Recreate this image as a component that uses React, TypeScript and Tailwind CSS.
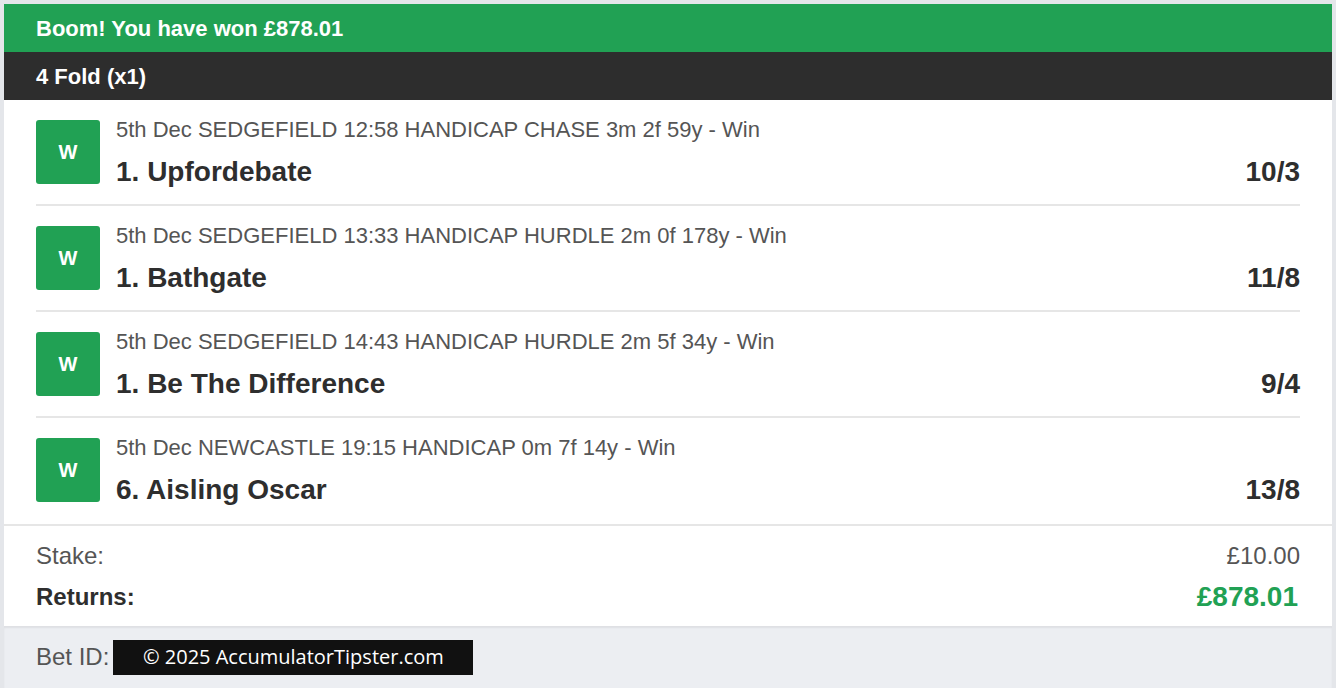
const legs = [
  {
    info: "5th Dec SEDGEFIELD 12:58 HANDICAP CHASE 3m 2f 59y - Win",
    runner: "1. Upfordebate",
    odds: "10/3",
  },
  {
    info: "5th Dec SEDGEFIELD 13:33 HANDICAP HURDLE 2m 0f 178y - Win",
    runner: "1. Bathgate",
    odds: "11/8",
  },
  {
    info: "5th Dec SEDGEFIELD 14:43 HANDICAP HURDLE 2m 5f 34y - Win",
    runner: "1. Be The Difference",
    odds: "9/4",
  },
  {
    info: "5th Dec NEWCASTLE 19:15 HANDICAP 0m 7f 14y - Win",
    runner: "6. Aisling Oscar",
    odds: "13/8",
  },
];

const App = () => {
  return (
    <div
      className="min-h-[688px] bg-[#e4e6ea] px-[4px] pt-[4px]"
      style={{ fontFamily: '"Liberation Sans", Arial, sans-serif' }}
    >
      <div className="bg-white">
        {/* Cabecera */}
        <div className="flex h-[48px] items-center bg-[#21a154] px-8 text-[22px] font-bold text-white">
          Boom! You have won £878.01
        </div>
        <div className="flex h-[48px] items-center bg-[#2d2d2d] px-8 text-[22px] font-bold text-white">
          4 Fold (x1)
        </div>

        {/* Selecciones */}
        <div className="px-8">
          {legs.map((leg, i) => (
            <div
              key={leg.runner}
              className={`flex h-[106px] items-start gap-4 pt-[20px] ${
                i < legs.length - 1 ? "border-b-2 border-[#e6e6e6]" : ""
              }`}
            >
              <div className="flex h-[64px] w-[64px] shrink-0 items-center justify-center rounded-[3px] bg-[#21a154] text-[20px] font-bold text-white">
                W
              </div>
              <div className="flex-1">
                <p className="text-[22px] leading-[20px] text-[#555555]">{leg.info}</p>
                <div className="mt-[15px] flex items-center justify-between text-[28px] font-bold leading-[34px] text-[#2e2e2e]">
                  <span>{leg.runner}</span>
                  <span>{leg.odds}</span>
                </div>
              </div>
            </div>
          ))}
        </div>

        {/* Stake / Returns */}
        <div className="border-t-2 border-[#e6e6e6] px-8 pb-[10px] pt-3 text-[24px]">
          <div className="flex h-[36px] items-center justify-between text-[#555555]">
            <span>Stake:</span>
            <span>£10.00</span>
          </div>
          <div className="mt-[4px] flex h-[38px] items-center justify-between">
            <span className="font-bold text-[#2e2e2e]">Returns:</span>
            <span className="pr-[2px] text-[28px] font-bold text-[#21a154]">£878.01</span>
          </div>
        </div>
      </div>

      {/* Bet ID */}
      <div className="flex h-[62px] items-center bg-[#eceef2] px-8 shadow-[inset_0_2px_2px_rgba(0,0,0,0.06)]">
        <span className="text-[24px] text-[#555555]">Bet ID:</span>
        <span
          className="ml-[4px] flex h-[35px] w-[360px] items-center justify-center bg-[#111111] text-[20px] text-white"
          style={{ fontFamily: '"Open Sans", sans-serif' }}
        >
          © 2025 AccumulatorTipster.com
        </span>
      </div>
    </div>
  );
};

export default App;
